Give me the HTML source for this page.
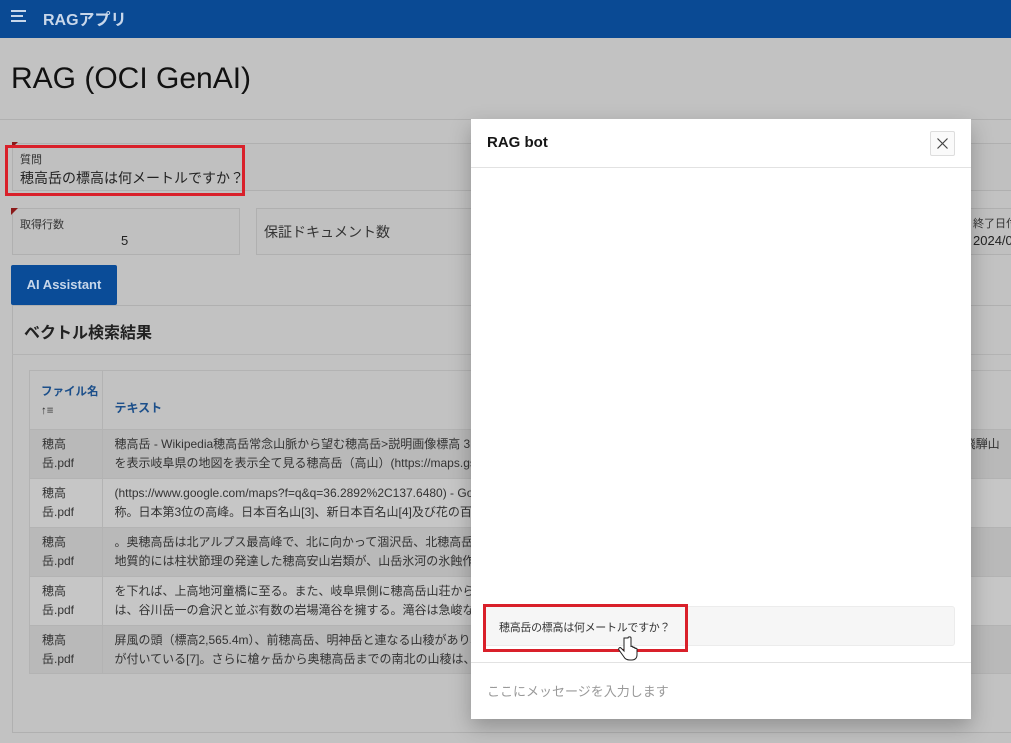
<!DOCTYPE html>
<html><head><meta charset="utf-8"><style>
*{box-sizing:border-box;margin:0;padding:0}
body{width:1011px;height:743px;overflow:hidden;background:#c2c2c2;font-family:"Liberation Sans","Noto Sans CJK JP",sans-serif;color:#161616;position:relative}
.a{position:absolute;white-space:nowrap}
.hdr{left:0;top:0;width:1011px;height:38px;background:#0a4a94}
.box{border:1px solid #b0b0b0;background:#c0c0c0}
.tbl td{border-bottom:1px solid #b3b3b3;font-size:12px;line-height:19px;color:#333;vertical-align:top;padding:5px 12px;white-space:nowrap;overflow:hidden}
.red{border:3px solid #d9202a}
</style></head><body>
<div class="a hdr"></div>
<div class="a" style="left:11px;top:10px;width:15px;height:2px;background:#c8d7ea"></div>
<div class="a" style="left:11px;top:15px;width:12px;height:2px;background:#c8d7ea"></div>
<div class="a" style="left:11px;top:20px;width:15px;height:2px;background:#c8d7ea"></div>
<div class="a" style="left:43px;top:6px;font-size:16px;font-weight:bold;color:#c8d7ea">RAGアプリ</div>
<div class="a" style="left:11px;top:62px;font-size:30px;color:#111">RAG (OCI GenAI)</div>
<div class="a" style="left:0;top:119px;width:1011px;height:1px;background:#b0b0b0"></div>

<div class="a box" style="left:12px;top:143px;width:1010px;height:48px"></div>
<div class="a" style="left:12px;top:142px;width:0;height:0;border-top:6px solid #8b1a1a;border-right:6px solid transparent"></div>
<div class="a" style="left:20px;top:151px;font-size:11px;color:#333">質問</div>
<div class="a" style="left:20px;top:168px;font-size:14px;color:#222">穂高岳の標高は何メートルですか？</div>
<div class="a red" style="left:5px;top:145px;width:240px;height:51px"></div>

<div class="a box" style="left:12px;top:208px;width:228px;height:47px"></div>
<div class="a" style="left:11px;top:208px;width:0;height:0;border-top:7px solid #8b1a1a;border-right:7px solid transparent"></div>
<div class="a" style="left:20px;top:216px;font-size:11px;color:#333">取得行数</div>
<div class="a" style="left:121px;top:233px;font-size:13px;color:#222">5</div>
<div class="a box" style="left:256px;top:208px;width:300px;height:47px"></div>
<div class="a" style="left:264px;top:222px;font-size:14px;color:#333">保証ドキュメント数</div>
<div class="a box" style="left:960px;top:208px;width:60px;height:47px"></div>
<div class="a" style="left:973px;top:215px;font-size:11px;color:#333">終了日付</div>
<div class="a" style="left:973px;top:233px;font-size:13px;color:#222">2024/0</div>

<div class="a" style="left:11px;top:265px;width:106px;height:40px;background:#0a4c98;border-radius:2px;color:#c8d7ea;font-size:13px;font-weight:bold;line-height:40px;text-align:center">AI Assistant</div>
<div class="a box" style="left:12px;top:305px;width:1010px;height:428px;background:#c2c2c2"></div>
<div class="a" style="left:24px;top:319px;font-size:16px;font-weight:bold;color:#222">ベクトル検索結果</div>
<div class="a" style="left:12px;top:354px;width:1000px;height:1px;background:#b3b3b3"></div>

<div class="a" style="left:29px;top:370px;width:990px;height:304px;border:1px solid #b3b3b3;overflow:hidden">
<table class="tbl" style="border-collapse:collapse;width:990px;table-layout:fixed">
<col style="width:72px"><col>
<tr style="height:58px"><td style="border-right:1px solid #b3b3b3;color:#1c4f8a;font-weight:bold;padding:12px 0 0 11px;font-size:11.5px">ファイル名<br><span style="color:#333;font-weight:normal">↑≡</span></td><td style="color:#1c4f8a;font-weight:bold;padding-top:28px">テキスト</td></tr>
<tr style="height:49px;background:#b9b9b9"><td style="border-right:1px solid #b3b3b3">穂高<br>岳.pdf</td><td>穂高岳 - Wikipedia穂高岳常念山脈から望む穂高岳&gt;説明画像標高 3,190m所在地日本長野県松本市・岐阜県高山市位置北緯36度17分21秒 東経137度38分53秒 : 飛騨山<br>を表示岐阜県の地図を表示全て見る穂高岳（高山）(https://maps.gsi.go.jp/#15/36.2892/137.6480/)(https://www.google.com/maps?f=</td></tr>
<tr style="height:49px;background:#c6c6c6"><td style="border-right:1px solid #b3b3b3">穂高<br>岳.pdf</td><td>(https://www.google.com/maps?f=q&amp;q=36.2892%2C137.6480) - Google マップ 穂高岳は長野県と岐阜県にまたがる山で、中部山岳国立公園<br>称。日本第3位の高峰。日本百名山[3]、新日本百名山[4]及び花の百名山</td></tr>
<tr style="height:49px;background:#b9b9b9"><td style="border-right:1px solid #b3b3b3">穂高<br>岳.pdf</td><td>。奥穂高岳は北アルプス最高峰で、北に向かって涸沢岳、北穂高岳、前穂高岳と連なり、周辺の山々の名称の由来となっている[7<br>地質的には柱状節理の発達した穂高安山岩類が、山岳氷河の氷蝕作用を</td></tr>
<tr style="height:49px;background:#c6c6c6"><td style="border-right:1px solid #b3b3b3">穂高<br>岳.pdf</td><td>を下れば、上高地河童橋に至る。また、岐阜県側に穂高岳山荘から白出沢を経て新穂高温泉に至る登山道がある。谷川岳と<br>は、谷川岳一の倉沢と並ぶ有数の岩場滝谷を擁する。滝谷は急峻なだけで</td></tr>
<tr style="height:49px;background:#b9b9b9"><td style="border-right:1px solid #b3b3b3">穂高<br>岳.pdf</td><td>屏風の頭（標高2,565.4m）、前穂高岳、明神岳と連なる山稜があり、吊尾根と呼ばれる稜線で結ばれ、前穂高岳<br>が付いている[7]。さらに槍ヶ岳から奥穂高岳までの南北の山稜は、奥穂高岳</td></tr>
</table></div>

<div class="a" style="left:471px;top:119px;width:500px;height:600px;background:#fff;box-shadow:0 8px 20px rgba(0,0,0,.25)"></div>
<div class="a" style="left:487px;top:134px;font-size:15px;font-weight:bold;color:#161616">RAG bot</div>
<div class="a" style="left:930px;top:131px;width:25px;height:25px;border:1px solid #ddd;border-radius:2px;background:#fafafa">
<svg width="23" height="23" viewBox="0 0 23 23"><path d="M6.5 6.5L16.5 16.5M16.5 6.5L6.5 16.5" stroke="#444" stroke-width="1.2"/></svg></div>
<div class="a" style="left:471px;top:167px;width:500px;height:1px;background:#e2e2e2"></div>
<div class="a" style="left:484px;top:606px;width:471px;height:40px;background:#f6f6f6;border:1px solid #ececec;border-radius:3px"></div>
<div class="a" style="left:499px;top:619px;font-size:11px;color:#333;letter-spacing:-0.3px">穂高岳の標高は何メートルですか？</div>
<div class="a red" style="left:483px;top:604px;width:205px;height:48px"></div>
<svg class="a" style="left:618px;top:636px" width="22" height="26" viewBox="0 0 22 26"><path d="M6 2v13l-3-3c-1-1-3 0-2 2l5 7c1 2 3 3 6 3h2c3 0 5-2 5-5v-6c0-1-2-1-2 0v-1c0-1-2-1-2 0v-1c0-1-2-1-2 0V2c0-1.5-3-1.5-3 0z" fill="#fff" stroke="#222" stroke-width="1"/></svg>
<div class="a" style="left:471px;top:662px;width:500px;height:1px;background:#e2e2e2"></div>
<div class="a" style="left:487px;top:681px;font-size:13px;color:#999">ここにメッセージを入力します</div>
</body></html>
